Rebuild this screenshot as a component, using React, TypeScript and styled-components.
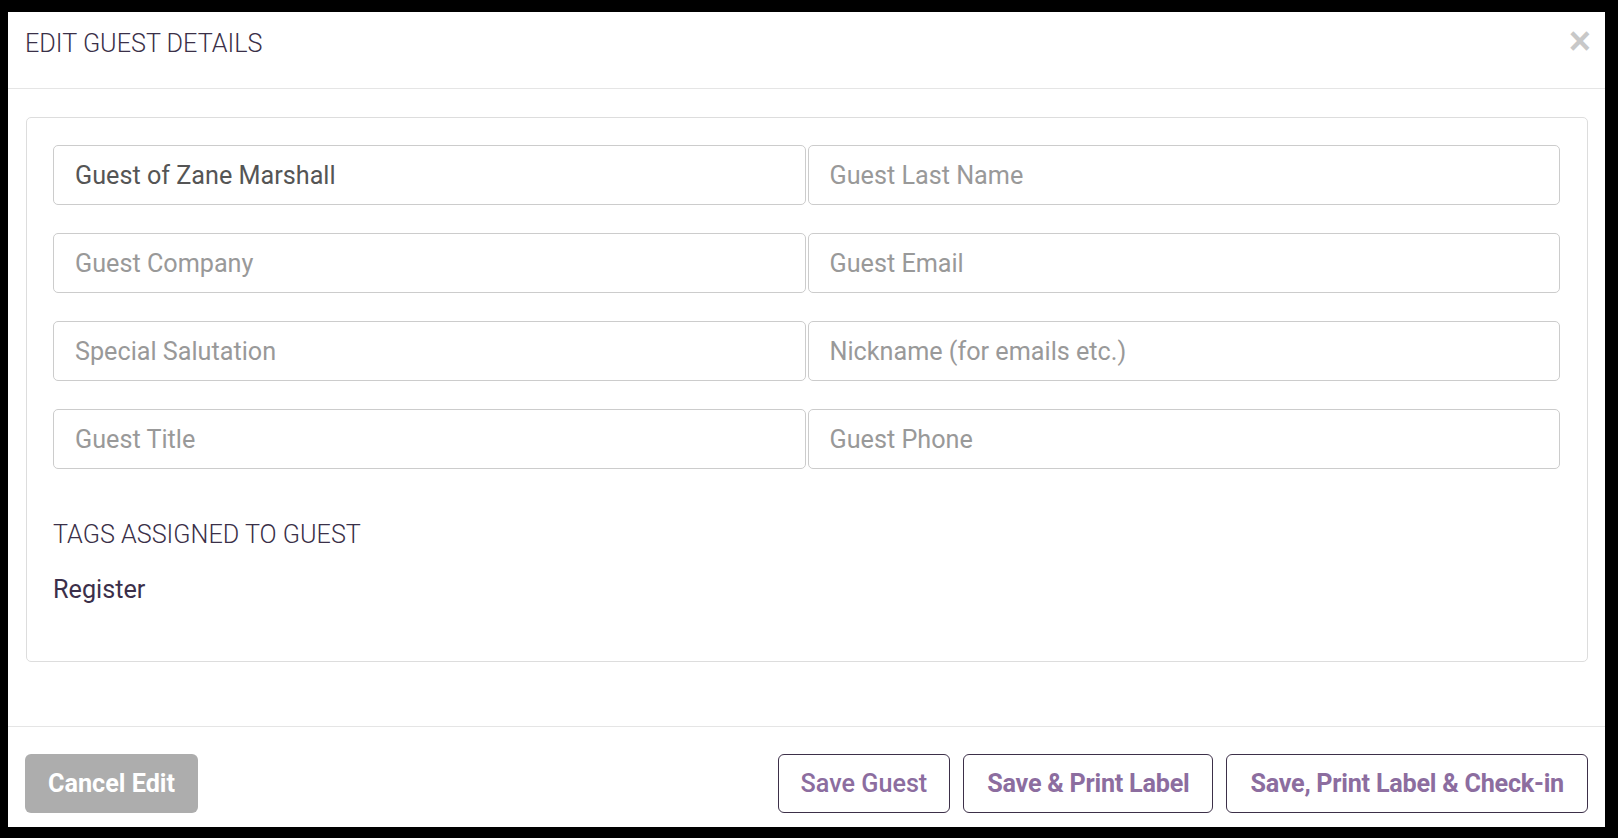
import React from 'react';
import styled, { createGlobalStyle } from 'styled-components';

const GlobalStyle = createGlobalStyle`
  html, body {
    margin: 0;
    padding: 0;
    background: #000;
  }
  body {
    font-family: Roboto, "Liberation Sans", sans-serif;
  }
  * {
    box-sizing: border-box;
  }
`;

const fields = [
  { placeholder: 'Guest First Name', value: 'Guest of Zane Marshall' },
  { placeholder: 'Guest Last Name', value: '' },
  { placeholder: 'Guest Company', value: '' },
  { placeholder: 'Guest Email', value: '' },
  { placeholder: 'Special Salutation', value: '' },
  { placeholder: 'Nickname (for emails etc.)', value: '' },
  { placeholder: 'Guest Title', value: '' },
  { placeholder: 'Guest Phone', value: '' },
];

function App() {
  return (
    <Page>
      <GlobalStyle />
      <Modal>
        <Header>
          <Title>EDIT GUEST DETAILS</Title>
          <Close type="button" aria-label="Close">×</Close>
        </Header>
        <Body>
          <Card>
            <FieldGrid>
              {fields.map((f) => (
                <Input key={f.placeholder} placeholder={f.placeholder} defaultValue={f.value} />
              ))}
            </FieldGrid>
            <SectionHeading>TAGS ASSIGNED TO GUEST</SectionHeading>
            <TagList>
              <Tag>Register</Tag>
            </TagList>
          </Card>
        </Body>
        <Footer>
          <CancelButton type="button">Cancel Edit</CancelButton>
          <Actions>
            <OutlineButton type="button" $primary={false}>Save Guest</OutlineButton>
            <OutlineButton type="button" $primary>Save &amp; Print Label</OutlineButton>
            <OutlineButton type="button" $primary>Save, Print Label &amp; Check-in</OutlineButton>
          </Actions>
        </Footer>
      </Modal>
    </Page>
  );
}

const Page = styled.div`
  height: 838px;
  padding: 12px 13px 11px 8px;
  display: flex;
`;

const Modal = styled.div`
  flex: 1;
  background: #fff;
  display: flex;
  flex-direction: column;
`;

const Header = styled.div`
  height: 77px;
  border-bottom: 1px solid #e5e5e5;
  display: flex;
  align-items: flex-start;
  justify-content: space-between;
  padding: 17px 14px 0 17px;
`;

const Title = styled.h4`
  margin: 0;
  font-weight: 300;
  font-size: 25.2px;
  line-height: 30px;
  color: #3a3048;
`;

const Close = styled.button`
  border: 0;
  background: none;
  padding: 0;
  margin-top: -7px;
  font-family: "Liberation Sans", Arial, sans-serif;
  font-weight: 700;
  font-size: 38px;
  line-height: 1;
  color: #c8c8c8;
  cursor: pointer;
`;

const Body = styled.div`
  flex: 1;
  padding: 28px 17px 0 18px;
`;

const Card = styled.div`
  border: 1px solid #ddd;
  border-radius: 5px;
  padding: 27px 27px 27px 26px;
`;

const FieldGrid = styled.div`
  display: grid;
  grid-template-columns: 1fr 1fr;
  column-gap: 2px;
  row-gap: 28px;
`;

const Input = styled.input`
  height: 60px;
  width: 100%;
  border: 1px solid #ccc;
  border-radius: 5px;
  padding: 0 21px;
  font-family: Roboto, "Liberation Sans", sans-serif;
  font-size: 25.2px;
  color: #555;
  background: #fff;
  outline: none;
  &::placeholder {
    color: #999;
  }
`;

const SectionHeading = styled.div`
  margin-top: 48px;
  font-size: 25.2px;
  font-weight: 300;
  color: #3a3048;
  line-height: 36px;
`;

const TagList = styled.div`
  margin-top: 19px;
  padding-bottom: 26px;
`;

const Tag = styled.div`
  font-size: 25.2px;
  color: #3b2f4a;
  line-height: 36px;
`;

const Footer = styled.div`
  height: 101px;
  border-top: 1px solid #e5e5e5;
  display: flex;
  align-items: flex-start;
  justify-content: space-between;
  padding: 27px 17px 0 17px;
`;

const Actions = styled.div`
  display: flex;
  gap: 13px;
`;

const CancelButton = styled.button`
  height: 59px;
  padding: 0 23px;
  border: 0;
  border-radius: 6px;
  background: #adadad;
  color: #fff;
  font-family: Roboto, "Liberation Sans", sans-serif;
  font-size: 25.2px;
  font-weight: 700;
`;

const OutlineButton = styled.button<{ $primary: boolean }>`
  height: 59px;
  padding: 0 ${(p) => (p.$primary ? '23px' : '22px')};
  border: 1px solid #3d3049;
  border-radius: 6px;
  background: #fff;
  color: #8c6d9f;
  font-family: Roboto, "Liberation Sans", sans-serif;
  font-size: 25.2px;
  font-weight: ${(p) => (p.$primary ? 700 : 500)};
  letter-spacing: ${(p) => (p.$primary ? '-0.25px' : '0')};
`;

export default App;
